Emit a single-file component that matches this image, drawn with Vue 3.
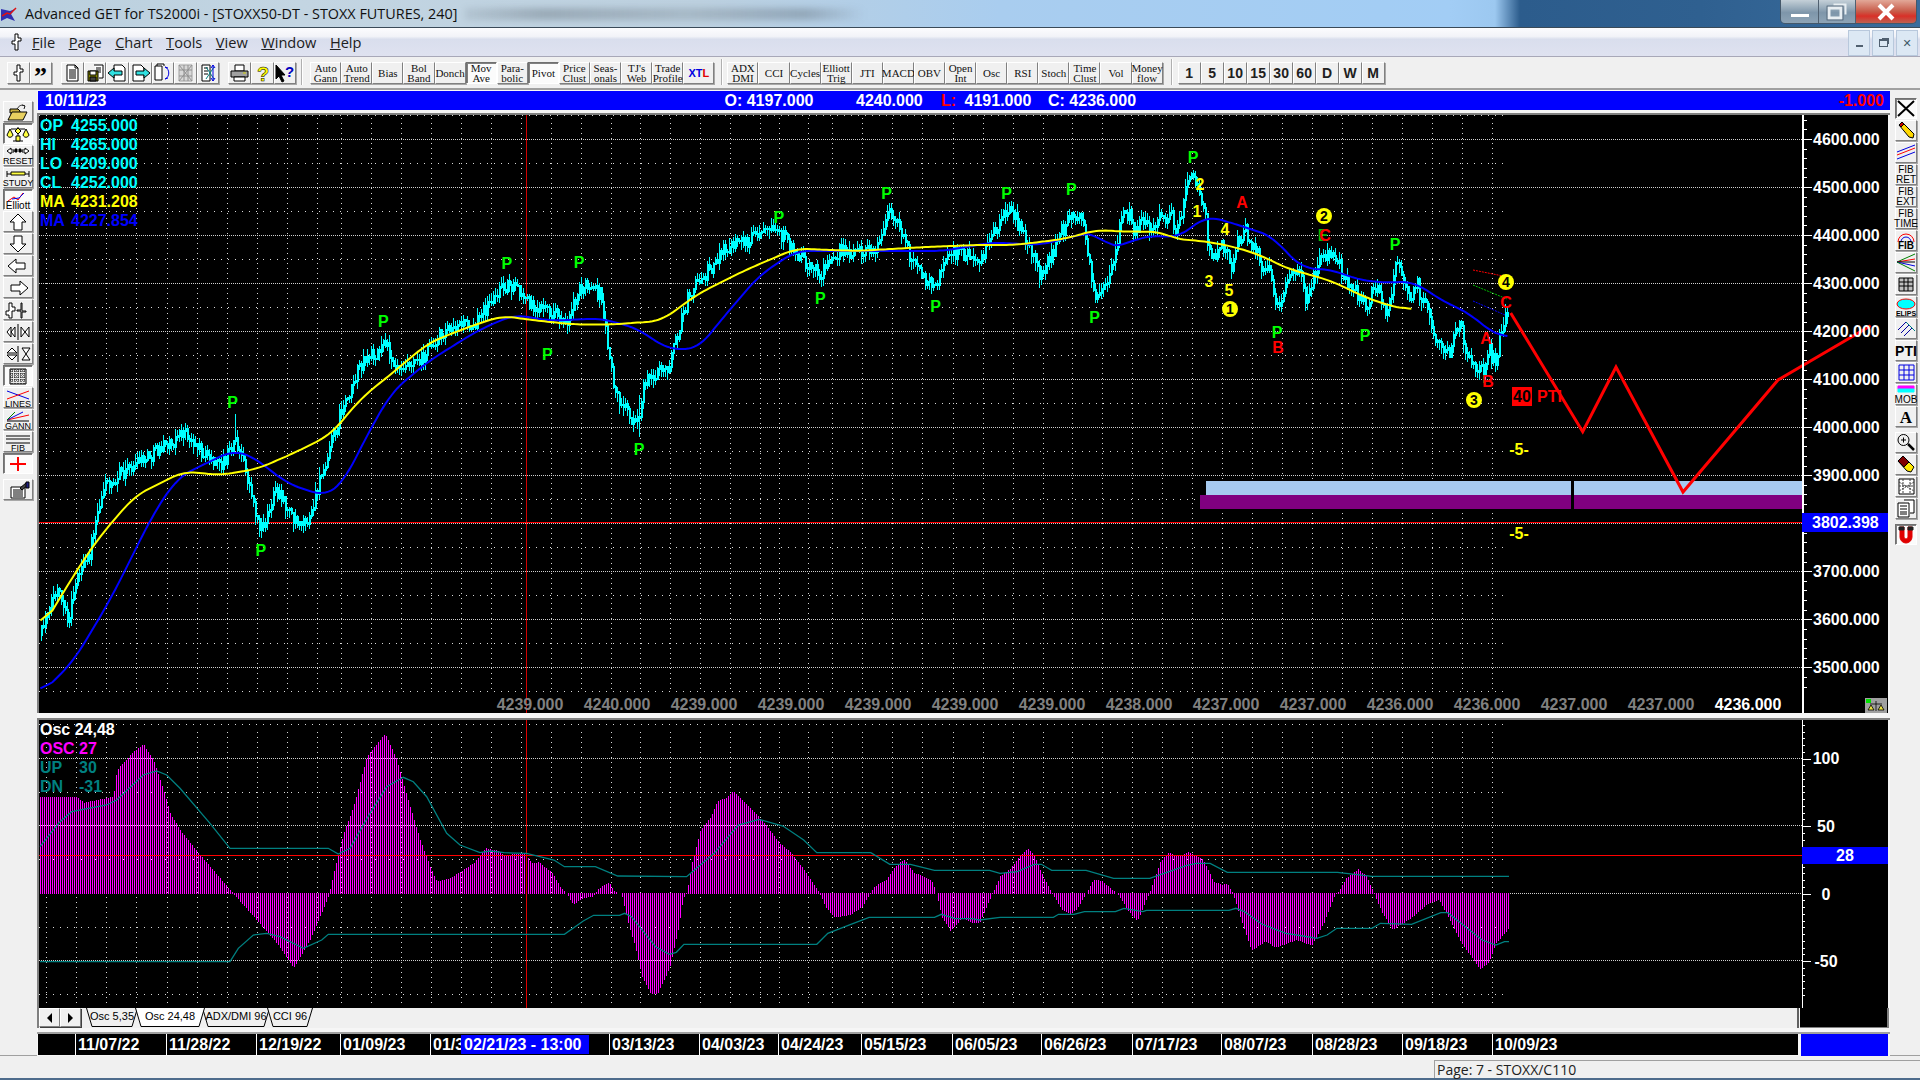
<script setup>
import { h } from 'vue'

const dsp = a => a.map(([x, y]) => [x * 1.2245, y * 1.2245])
const z5 = a => a.map(([x, y]) => [1100 + x / 3, 140 + y / 3])
const z9 = a => a.map(([x, y]) => [x / 3, 700 + y / 3])
const z11 = a => a.map(([x, y]) => [480 + x / 2.904, 720 + y / 3])
const z12 = a => a.map(([x, y]) => [1000 + x / 2.904, 720 + y / 3])
const pl = a => a.map(p => p[0].toFixed(1) + ',' + p[1].toFixed(1)).join(' ')
const interp = (a, x) => {
  if (x <= a[0][0]) return a[0][1]
  for (let i = 1; i < a.length; i++) {
    if (x <= a[i][0]) {
      const t = (x - a[i - 1][0]) / (a[i][0] - a[i - 1][0] || 1)
      return a[i - 1][1] + t * (a[i][1] - a[i - 1][1])
    }
  }
  return a[a.length - 1][1]
}
const smooth = (a, step = 3, win = 4) => {
  const x0 = a[0][0], x1 = a[a.length - 1][0], out = []
  for (let x = x0; x <= x1; x += step) {
    let s = 0, n = 0
    for (let k = -win; k <= win; k++) {
      const xx = x + k * step
      if (xx < x0 || xx > x1) continue
      s += interp(a, xx); n++
    }
    out.push([x, s / n])
  }
  return out
}
let seed = 12345
const rnd = () => {
  seed = (seed * 1664525 + 1013904223) % 4294967296
  return seed / 4294967296
}

const pricePath = [
  ...dsp([[33,518],[40,490],[47,482],[55,510],[62,470],[72,455],[78,420],[85,395],[100,385],[125,370],[150,352],[168,372],[180,380],[192,358],[197,375],[203,395],[212,432],[225,402],[240,422],[252,425],[260,395],[268,365],[280,330],[295,295],[315,280],[322,298],[345,290],[365,265],[390,262],[400,245],[415,230],[430,245],[445,255],[463,260],[473,232],[490,240],[497,290],[502,320],[515,340],[522,345],[525,310],[545,300],[562,240],[590,205],[610,195],[635,188],[650,205],[670,225],[680,205],[715,205],[725,172],[735,185],[745,215],[762,235],[775,205],[800,210],[815,180],[825,170],[835,190],[850,225],[875,170],[885,185],[893,240]]),
  ...z5([[5,460],[30,380],[50,300],[60,230],[90,210],[100,270],[130,240],[150,280],[180,230],[215,225],[225,300],[245,200],[255,150],[280,95],[300,170],[310,200],[320,260],[320,310],[335,370],[350,320],[375,310],[390,390],[405,310],[420,300],[430,250],[445,310],[470,330],[480,400],[500,390],[515,420],[525,470],[545,490],[555,440],[570,400],[600,370],[615,470],[640,410],[660,345],[695,350],[720,380],[735,410],[760,450],[800,500],[820,430],[850,480],[860,520],[880,420],[890,350],[905,420],[930,470],[950,415],[960,470],[990,530],[1005,600],[1020,630],[1050,630],[1065,580],[1075,530],[1090,600],[1105,650],[1120,690],[1150,680],[1165,630],[1185,670],[1195,600],[1210,540],[1225,515]])
]
let wickD = '', bodyD = '', prev = pricePath[0][1]
for (let x = 41; x <= 1507; x += 2) {
  const c = interp(pricePath, x) + (rnd() - 0.5) * 14
  const top = Math.min(prev, c), bot = Math.max(prev, c) + 2
  wickD += `M${x + 0.5} ${(top - rnd() * 8).toFixed(0)}V${(bot + rnd() * 8).toFixed(0)}`
  bodyD += `M${x + 1} ${top.toFixed(0)}V${bot.toFixed(0)}`
  prev = c
}
const spikes = [[235,414,445],[639,437,395]].map(s => `M${s[0]} ${s[1]}V${s[2]}`).join('')
const candleWick = wickD + spikes
const candleBody = bodyD

const yellowPts = pl(smooth([
  ...dsp([[33,515],[60,470],[80,440],[110,405],[150,385],[180,388],[210,383],[240,370],[270,355],[295,325],[320,305],[350,280],[380,268],[410,258],[440,262],[470,265],[500,265],[540,262],[570,240],[610,220],[650,203],[700,205],[750,202],[800,200],[830,200],[870,195],[898,187]]),
  ...z5([[0,272],[100,275],[180,275],[230,298],[310,303],[400,320],[480,345],[560,385],[650,410],[700,425],[780,465],[860,495],[935,510]])
]))
const bluePts = pl(smooth([
  ...dsp([[33,567],[60,540],[90,490],[125,420],[145,390],[165,380],[190,368],[205,372],[235,395],[265,405],[280,395],[300,355],[320,320],[350,295],[390,270],[420,257],[450,262],[490,260],[520,268],[545,285],[570,285],[590,260],[620,225],[650,205],[700,205],[740,205],[770,205],[810,198],[850,200],[880,192],[898,190]]),
  ...z5([[0,305],[40,325],[100,300],[170,285],[230,295],[270,265],[320,228],[400,250],[520,290],[560,340],[610,385],[700,390],[760,415],[840,428],[940,425],[1040,490],[1100,515],[1180,580],[1225,595]])
]))
const redPts = pl([[1510.7,313],[1582.7,431.7],[1616,367],[1683,492],[1778,380],[1870.7,325.7]])

const cols = [46,76,106,136,166.5,196.5,226.5,257,287,317,340.6,370.7,400.8,431,461,491,520.5,550.5,580.5,610.5,640,670,700,729.6,759.6,779,808,832,862,892,922,952.7,982.7,1012.7,1042.7,1072.3,1102.3,1132.3,1162.3,1192.3,1222.4,1252.4,1282.4,1312.3,1342.3,1372.2,1402.2,1432.2,1462.1,1492.4].map(x => Math.round(x) + 0.5)
const colD = (a, b) => cols.map(x => `M${x} ${a}V${b}`).join('')

const mainMajor = [], mainMinor = []
for (let i = 0; i < 12; i++) mainMajor.push(Math.round(139 + i * 48.03) + 0.5)
for (let i = -1; i < 12; i++) mainMinor.push(Math.round(163 + i * 48.03) + 0.5)
const mainMajorD = mainMajor.map(y => `M39 ${y}H1803`).join('')
const mainMinorD = mainMinor.map(y => `M39 ${y}H1505`).join('')
const mainColD = colD(118, 692)
const axisLabels = [4600,4500,4400,4300,4200,4100,4000,3900,null,3700,3600,3500]
  .map((v, i) => ({ v, y: 139 + i * 48.03 })).filter(a => a.v).map(a => ({ t: a.v + '.000', y: a.y + 6 }))
let tickMain = ''
for (let i = -2; i < 58; i++) {
  const y = Math.round(139 + i * 9.606) + 0.5
  if (y > 118 && y < 712 && !(y > 512 && y < 533)) tickMain += `M1803 ${y}h${i % 5 === 0 ? 9 : 4}`
}
const bottomLabels = [4239,4240,4239,4239,4239,4239,4239,4238,4237,4237,4236,4236,4237,4237,4236]
  .map((v, i) => ({ t: v + '.000', x: 530 + i * 87, c: i === 14 ? '#fff' : '#808080' }))
const legendMain = [
  ['OP', '4255.000', '#00ffff'], ['HI', '4265.000', '#00ffff'], ['LO', '4209.000', '#00ffff'],
  ['CL', '4252.000', '#00ffff'], ['MA', '4231.208', '#ffff00'], ['MA', '4227.854', '#0000ff']
].map((r, i) => ({ a: r[0], b: r[1], c: r[2], y: 131 + i * 19 }))

const pLabels = dsp([[190,328],[213,449],[313,262],[414,215],[447,289],[473,214],[522,367],[636,177],[670,243],[724,158],[764,250],[822,158],[875,154],[894,259]])
  .concat([[1193,157],[1395,244],[1277,332],[1365,335]])
const chartMarks = [
  ...pLabels.map(p => ({ t: 'P', x: p[0], y: p[1], c: '#00ff00' })),
  { t: '2', x: 1200, y: 184, c: '#ffff00' }, { t: '1', x: 1197, y: 211, c: '#ffff00' },
  { t: '4', x: 1225, y: 229, c: '#ffff00' }, { t: '3', x: 1209, y: 281, c: '#ffff00' },
  { t: '5', x: 1229, y: 290, c: '#ffff00' }, { t: 'A', x: 1242, y: 202, c: '#ff0000' },
  { t: 'E', x: 1323, y: 235, c: '#00c000' }, { t: 'C', x: 1325, y: 235, c: '#ff0000' },
  { t: 'B', x: 1278, y: 347, c: '#ff0000' }, { t: 'B', x: 1488, y: 381, c: '#ff0000' },
  { t: 'A', x: 1486, y: 338, c: '#ff0000' }, { t: 'C', x: 1506, y: 302, c: '#ff0000' },
  { t: '-5-', x: 1519, y: 449, c: '#ffff00' }, { t: '-5-', x: 1519, y: 532.5, c: '#ffff00' }
]
const circles = [[1230,309,'1'],[1324,216,'2'],[1474,400,'3'],[1506,282,'4']].map(c => ({ x: c[0], y: c[1], t: c[2] }))

const histEnv = [
  ...z9([[120,290],[230,290],[250,308],[340,290],[350,210],[400,155],[430,133],[460,180],[490,270],[510,340],[540,390],[600,465],[690,570],[700,582],[760,650],[830,730],[880,805],[930,720],[985,590],[1000,520],[1030,400],[1060,320],[1100,170],[1155,100],[1190,180],[1230,320],[1260,420],[1290,500],[1310,545],[1350,535],[1420,490]]),
  ...z11([[0,405],[15,385],[50,392],[70,405],[130,400],[150,430],[170,427],[210,460],[235,505],[250,520],[270,553],[300,535],[325,530],[335,520],[345,505],[375,487],[390,515],[410,520],[430,610],[450,680],[470,770],[495,822],[515,822],[550,745],[575,630],[590,535],[600,520],[615,430],[640,330],[670,290],[690,242],[715,235],[735,213],[790,270],[830,315],[870,370],[900,395],[930,435],[955,470],[985,520],[1005,565],[1030,593],[1075,585],[1110,560],[1130,525],[1145,500],[1180,478],[1205,440],[1230,418],[1260,458],[1310,480],[1325,520],[1340,590],[1365,632],[1400,595],[1430,610],[1450,610]]),
  ...z12([[0,468],[30,445],[60,405],[82,385],[100,410],[125,470],[150,520],[180,570],[205,583],[225,565],[250,520],[270,480],[295,482],[325,510],[340,520],[370,570],[398,605],[420,550],[435,515],[465,425],[490,397],[520,410],[545,397],[590,420],[620,485],[645,495],[660,490],[675,520],[700,600],[730,692],[770,665],[800,683],[860,660],[905,677],[940,610],[970,530],[985,510],[1005,475],[1040,448],[1065,470],[1085,520],[1110,580],[1140,630],[1200,590],[1240,552],[1275,540],[1300,590],[1340,670],[1395,750],[1420,725],[1440,670],[1478,625]])
]
let histD = ''
for (let x = 40; x <= 1509; x += 2) {
  const y = Math.round(interp(histEnv, x))
  if (Math.abs(y - 893) >= 1) histD += `M${x + 0.5} ${y}V${y < 893 ? 894 : 893}`
}
const upPts = pl([
  ...z9([[120,440],[180,365],[215,335],[320,315],[350,300],[430,225],[470,213],[500,225],[540,265],[630,370],[690,445],[985,445],[1015,462],[1050,445],[1110,340],[1160,260],[1210,232],[1240,245],[1280,290],[1340,400],[1380,435]]),
  ...z11([[0,398],[30,393],[70,398],[135,400],[215,420],[245,440],[335,440],[400,468],[600,470],[680,400],[750,315],[810,298],[880,318],[940,360],[978,398],[1135,398],[1190,433],[1250,433],[1320,451],[1480,451]]),
  ...z12([[0,460],[50,455],[100,433],[120,433],[150,451],[250,451],[330,475],[435,475],[540,437],[570,430],[610,430],[660,457],[980,457],[1080,469],[1478,469]])
])
const dnPts = pl([
  ...z9([[120,785],[690,785],[715,745],[760,705],[800,700],[840,710],[910,745],[965,720],[985,703]]),
  ...z11([[0,643],[245,643],[300,603],[330,586],[405,586],[420,580],[440,590],[510,680],[550,703],[570,697],[592,673],[978,673],[1010,640],[1060,620],[1130,592],[1320,592],[1340,583],[1380,596],[1430,596],[1450,600]]),
  ...z12([[0,592],[155,592],[170,583],[215,583],[245,575],[335,575],[360,565],[415,575],[425,571],[665,571],[685,565],[710,575],[760,612],[830,640],[880,648],[920,655],[950,645],[978,625],[1080,625],[1105,610],[1195,613],[1280,578],[1300,578],[1400,660],[1440,675],[1465,665],[1478,665]])
])
const oscMajorD = [758, 825, 960].map(y => `M39 ${y + 0.5}H1802`).join('') + 'M1510 893.5H1802'
const oscMinorD = [724, 792, 859, 927, 994].map(y => `M39 ${y + 0.5}H1505`).join('')
const oscColD = colD(732, 1006)
let tickOsc = ''
for (let i = -5; i < 36; i++) {
  const y = Math.round(758.5 + i * 6.75) + 0.5
  if (y > 722 && y < 1008 && !(y > 846 && y < 865)) tickOsc += `M1802 ${y}h${i % 10 === 0 ? 9 : 3}`
}
const oscAxis = [['100', 764], ['50', 832], ['0', 900], ['-50', 967]].map(a => ({ t: a[0], y: a[1] }))

const dates = [[76,'11/07/22'],[166.5,'11/28/22'],[257,'12/19/22'],[340.6,'01/09/23'],[431,'01/3'],[610,'03/13/23'],[700,'04/03/23'],[779,'04/24/23'],[862,'05/15/23'],[952.7,'06/05/23'],[1042,'06/26/23'],[1132.7,'07/17/23'],[1222,'08/07/23'],[1312.5,'08/28/23'],[1402.5,'09/18/23'],[1492.5,'10/09/23']]
  .map(d => ({ x: Math.round(d[0]), t: d[1] }))

const SANS = 'Liberation Sans, Arial, sans-serif'
const K = '#000'
const icons = {
  chart: [{ d: 'M10 3h3v4h3v3h-3v9h-3v-6H7v-3h3z', f: '#fff' }],
  quote: [{ t: '”', x: 5, y: 23, s: 26, w: 'bold', fam: 'Liberation Serif' }],
  page: [{ d: 'M6 3h8l3 3v13H6z M14 3v3h3 M8 8h7 M8 10h7 M8 12h7 M8 14h7 M8 16h7', f: '#fff' }],
  save: [{ d: 'M10 3h9v13h-4M12 6h5M12 8h5M12 10h5', f: '#fff' }, { d: 'M4 9h10v10H4z', f: '#808000' }, { d: 'M6 9h6v4H6z', f: '#fff' }, { d: 'M6 15h6v4H6z', f: '#404040' }],
  prev: [{ d: 'M8 3h8l3 3v13H8z', f: '#fff' }, { d: 'M2 11l6-5v3h8v4H8v3z', f: '#30e0e0' }],
  next: [{ d: 'M4 3h8l3 3v13H4z', f: '#fff' }, { d: 'M21 11l-6-5v3H7v4h8v3z', f: '#30e0e0' }],
  pgarr: [{ d: 'M4 4h7v14H4z M6 4V2h7v2', f: '#fff' }, { d: 'M14 5c5 2 5 10 0 12M14 17l3-1M14 5l3 1', c: '#0000e0' }],
  xpage: [{ d: 'M5 3h13v16H5z', c: '#a0a0a0', f: '#d8d8d8' }, { d: 'M5 3l13 16M18 3L5 19M5 8h13M5 14h13M10 3v16M14 3v16', c: '#909090' }],
  pgblue: [{ d: 'M5 3h8v16H5zM7 6h4M7 9h4M7 12h4', f: '#fff' }, { d: 'M9 5l8 12M9 17L17 5', c: '#008080' }, { d: 'M16 3v16M14 6l2-3 2 3M14 16l2 3 2-3', c: '#0000e0' }],
  print: [{ d: 'M7 3h9v6H7z', f: '#fff' }, { d: 'M3 9h17v6H3z', f: '#a0a0a0' }, { d: 'M6 15h11v4H6z', f: '#fff' }, { d: 'M15 11h3', c: '#d0d000' }],
  help: [{ t: '?', x: 6, y: 19, s: 20, w: 'bold', fill: '#ffff00', stroke: '#000', fam: SANS }],
  phelp: [{ d: 'M3 3v14l3-3 3 6 2-1-3-6h4z', f: '#000' }, { t: '?', x: 12, y: 15, s: 15, w: 'bold', fill: '#0000c0', fam: SANS }],

  open: [{ d: 'M7 7h8l2 2v2H7z', f: '#c8b040' }, { d: 'M5 18l4-8h15l-4 8z', f: '#e8d060' }, { d: 'M14 7c3-5 6-4 8-3M22 4l-3-1M22 4l-1 3', c: '#202020' }],
  scale: [{ d: 'M15 3v14M8 5h14M10 17h10', c: '#000' }, { d: 'M4 11l3-6 3 6c-1 3-5 3-6 0zM20 11l3-6 3 6c-1 3-5 3-6 0z', c: '#000', f: '#ffff40' }, { d: 'M12 7l3-3 3 3-3 3z', f: '#ffff40' }, { d: 'M13 12h4v5h-4z', f: '#ffff40' }],
  reset: [{ d: 'M4 5l4-3v2h3v2H8v2zM26 5l-4-3v2h-3v2h3v2z', f: '#fff' }, { d: 'M12 3h2v3h-2zM16 3h2v3h-2z', f: '#000' }, { t: 'RESET', x: 15, y: 18, s: 9, a: 'middle', fam: SANS }],
  study: [{ d: 'M4 3v6M26 3v6M4 6h22', c: '#000' }, { d: 'M8 4h14v3H8z', f: '#ffff40' }, { t: 'STUDY', x: 15, y: 18, s: 9, a: 'middle', fam: SANS }],
  elliott: [{ d: 'M5 11l6-4 4 3 5-7', c: '#ff0000' }, { d: 'M9 9l7-1 5-5', c: '#0000e0' }, { t: 'Elliott', x: 15, y: 19, s: 10, a: 'middle', fam: SANS }],
  up: [{ d: 'M15 2l8 8h-4v8h-8v-8H7z', f: '#fff' }],
  down: [{ d: 'M15 18l8-8h-4V2h-8v8H7z', f: '#fff' }],
  left: [{ d: 'M5 10l8-7v4h9v6h-9v4z', f: '#fff' }],
  right: [{ d: 'M25 10l-8-7v4H8v6h9v4z', f: '#fff' }],
  barz: [{ d: 'M6 3h3v4h3v4H9v7H6v-3H3v-4h3zM18 3h1v8h4v1h-4v6h-1v-7h-4v-1h4z', f: '#fff' }],
  hz: [{ d: 'M4 10l4-5v10zM12 5v10l-4-5zM15 2v16M18 5v10l4-5zM26 5v10l-4-5z', f: '#fff' }],
  vz: [{ d: 'M4 9l5-5 5 5zM4 11l5 5 5-5zM15 2v16', f: '#fff' }, { d: 'M19 4h8l-4 6 4 6h-8l4-6z', f: '#fff' }],
  grid: [{ d: 'M7 3h16v15H7z', f: '#e8e8e8' }, { d: 'M7 5h16M7 8h16M7 11h16M7 14h16M9 3v15M12 3v15M15 3v15M18 3v15M21 3v15', c: '#000', dash: '1 1' }],
  lines: [{ d: 'M4 3l22 8', c: '#0000e0' }, { d: 'M4 11l22-8', c: '#ff0000' }, { t: 'LINES', x: 15, y: 19, s: 9, a: 'middle', fam: SANS }],
  gann: [{ d: 'M4 10l22-5', c: '#ff0000' }, { d: 'M4 10l16-8', c: '#0000e0' }, { d: 'M4 10l8-8', c: '#008000' }, { d: 'M4 11h22', c: '#000' }, { t: 'GANN', x: 15, y: 19, s: 9, a: 'middle', fam: SANS }],
  fib: [{ d: 'M3 4h24M3 7h24M3 11h24', c: '#000' }, { t: 'FIB', x: 15, y: 19, s: 9, a: 'middle', fam: SANS }],
  cross: [{ d: 'M15 3v14M7 10h16', c: '#ff0000', sw: 2 }],
  setting: [{ d: 'M8 7h14v11H8zM10 10h10M10 12h10M10 14h10M10 16h10', f: '#fff' }, { d: 'M17 8l6-5 2 2-6 5z', f: '#404040' }, { d: 'M23 2h3v6h-3z', f: '#202080' }],

  x: [{ d: 'M3 3l16 15M19 3L3 18', c: '#000', sw: 2 }],
  pencil: [{ d: 'M4 5l3-3 12 12-1 4-4-1z', f: '#ffd800' }, { d: 'M4 5l3-3 2 2-3 3z', f: '#c00000' }],
  rlines: [{ d: 'M2 13l18-7', c: '#ff0000' }, { d: 'M2 10l18-7', c: '#0000e0' }, { d: 'M2 17l18-7', c: '#0000e0' }],
  fret: [{ t: 'FIB', x: 11, y: 9, s: 10, a: 'middle', fam: SANS }, { t: 'RET', x: 11, y: 19, s: 10, a: 'middle', fam: SANS }],
  fext: [{ t: 'FIB', x: 11, y: 9, s: 10, a: 'middle', fam: SANS }, { t: 'EXT', x: 11, y: 19, s: 10, a: 'middle', fam: SANS }],
  ftime: [{ t: 'FIB', x: 11, y: 9, s: 10, a: 'middle', fam: SANS }, { t: 'TIME', x: 11, y: 19, s: 10, a: 'middle', fam: SANS }],
  farc: [{ d: 'M3 12a8 8 0 0 1 16 0', c: '#ff0000' }, { d: 'M6 12a5 5 0 0 1 10 0', c: '#0000e0' }, { t: 'FIB', x: 11, y: 19, s: 10, w: 'bold', a: 'middle', fam: SANS }],
  fan: [{ d: 'M2 10l18-8', c: '#008000' }, { d: 'M2 10l18-3', c: '#ff0000' }, { d: 'M2 10h18', c: '#000' }, { d: 'M2 10l18 4', c: '#0000e0' }, { d: 'M2 10l18 9', c: '#008000' }],
  tab: [{ d: 'M4 4h14v13H4z', f: '#c0c0c0' }, { d: 'M4 8h14M4 12h14M9 4v13M13 4v13' }],
  elips: [{ d: 'M2 8a9 5 0 1 0 18 0a9 5 0 1 0-18 0', c: '#ff0000', f: '#00ffff' }, { t: 'ELIPS', x: 11, y: 20, s: 7, w: 'bold', a: 'middle', fam: SANS }],
  hatch: [{ d: 'M3 12l8-8M6 15l8-8M9 18l8-8', c: '#0000a0' }, { d: 'M11 4l9 9', c: '#008080' }],
  pti: [{ t: 'PTI', x: 11, y: 16, s: 14, w: 'bold', a: 'middle', fam: SANS }],
  bgrid: [{ d: 'M4 3h15v15H4zM4 8h15M4 13h15M9 3v15M14 3v15', c: '#0000e0' }],
  mob: [{ d: 'M3 2h16v3H3z', f: '#ff00ff', c: '#ff00ff' }, { d: 'M3 5h16v3H3z', f: '#00ffff', c: '#00ffff' }, { t: 'MOB', x: 11, y: 19, s: 10, a: 'middle', fam: SANS }],
  a: [{ t: 'A', x: 11, y: 17, s: 17, w: 'bold', a: 'middle', fam: 'Liberation Serif' }],
  mag: [{ d: 'M3 8a5.5 5.5 0 1 0 11 0a5.5 5.5 0 1 0-11 0M6 8h5M8.5 5.5v5' }, { d: 'M13 12l6 6', sw: 2.5 }],
  eraser: [{ d: 'M3 7l5-5 11 11-3 5-4-1z', f: '#ffe800' }, { d: 'M3 7l5-5 6 6-5 5z', f: '#800000' }],
  dots: [{ d: 'M4 3h15v15H4z', f: '#fff' }, { d: 'M4 6l15 9M19 6L4 15M8 3v15M15 3v15M4 10h15', c: '#404040', dash: '2 1' }],
  pages: [{ d: 'M9 2h10v13h-4', f: '#fff' }, { d: 'M3 5h11v14H3zM5 8h7M5 11h7M5 14h7M5 16h7', f: '#fff' }],
  magnet: [{ d: 'M5 3h4v10a2 2 0 0 0 4 0V3h4v10a6 6 0 0 1-12 0z', f: '#e00000', c: '#e00000' }, { d: 'M4 3h5v3H4zM13 3h5v3h-5z', f: '#202020', c: '#202020' }]
}

const Ico = props =>
  h('svg', { width: props.w, height: props.h, viewBox: `0 0 ${props.w} ${props.h}`, overflow: 'visible', 'aria-hidden': 'true' },
    (icons[props.name] || []).map(p => p.t
      ? h('text', { x: p.x, y: p.y, 'font-size': p.s, 'font-weight': p.w || 'normal', 'text-anchor': p.a || 'start', fill: p.fill || K, stroke: p.stroke || 'none', 'stroke-width': 0.5, 'font-family': p.fam }, p.t)
      : h('path', { d: p.d, fill: p.f || 'none', stroke: p.c || K, 'stroke-width': p.sw || 1, 'stroke-dasharray': p.dash || null })))
Ico.props = ['name', 'w', 'h']

const topA = ['chart', 'quote']
const topB = ['page', 'save', 'prev', 'next', 'pgarr', 'xpage', 'pgblue']
const topC = ['print', 'help', 'phelp']
const textA = [['Auto','Gann'],['Auto','Trend'],['Bias'],['Bol','Band'],['Donch'],['Mov','Ave',1],['Para-','bolic'],['Pivot',1],['Price','Clust'],['Seas-','onals'],["TJ's",'Web'],['Trade','Profile'],['XTL']]
  .map(a => ({ lines: a.filter(v => typeof v === 'string'), on: a.includes(1) }))
const textB = [['ADX','DMI'],['CCI'],['Cycles'],['Elliott','Trig'],['JTI'],['MACD'],['OBV'],['Open','Int'],['Osc'],['RSI'],['Stoch'],['Time','Clust'],['Vol'],['Money','flow']]
const periods = ['1', '5', '10', '15', '30', '60', 'D', 'W', 'M']
const menus = [['F', 'ile'], ['P', 'age'], ['C', 'hart'], ['T', 'ools'], ['V', 'iew'], ['W', 'indow'], ['H', 'elp']]
const leftTools = [
  [{ i: 'open' }, { i: 'scale', on: 1 }, { i: 'reset' }, { i: 'study' }, { i: 'elliott', on: 1 }, { i: 'up' }, { i: 'down' }, { i: 'left' }, { i: 'right' }, { i: 'barz' }, { i: 'hz' }, { i: 'vz' }, { i: 'grid', on: 1 }, { i: 'lines' }, { i: 'gann' }, { i: 'fib' }, { i: 'cross', on: 1 }],
  [{ i: 'setting' }]
]
const rightTools = [
  [{ i: 'x', on: 1 }, { i: 'pencil' }, { i: 'rlines' }, { i: 'fret' }, { i: 'fext' }, { i: 'ftime' }, { i: 'farc' }, { i: 'fan' }, { i: 'tab' }, { i: 'elips' }, { i: 'hatch' }, { i: 'pti' }, { i: 'bgrid' }, { i: 'mob' }, { i: 'a' }],
  [{ i: 'mag' }, { i: 'eraser' }, { i: 'dots' }, { i: 'pages' }],
  [{ i: 'magnet', on: 1 }]
]
const tabs = [{ t: 'Osc 5,35', w: 52 }, { t: 'Osc 24,48', w: 70, on: 1 }, { t: 'ADX/DMI 96', w: 68 }, { t: 'CCI 96', w: 46 }]
</script>

<template>
  <div class="app">
    <header class="title">
      <svg class="logo" width="20" height="18" viewBox="0 0 20 18">
        <path d="M0 4l9 2 5-2-4 5 4 7-8-3-6 3z" fill="#3030b0" />
        <path d="M1 11l5-3 3 1 6-6" fill="none" stroke="#e01010" stroke-width="1.5" />
      </svg>
      <span class="title-text">Advanced GET for TS2000i - [STOXX50-DT - STOXX FUTURES, 240]</span>
      <div class="smudge"></div>
      <div class="winbtns">
        <div class="wb wb-min"><i></i></div>
        <div class="wb wb-max">
          <svg width="22" height="18" viewBox="0 0 22 18">
            <path d="M7.5 1.5h12v10" fill="none" stroke="#e8eef2" stroke-width="2" />
            <rect x="3" y="5" width="12" height="10" fill="none" stroke="#e8eef2" stroke-width="3" />
            <rect x="1" y="3" width="16" height="14" fill="none" stroke="#45586a" stroke-width="0.7" />
          </svg>
        </div>
        <div class="wb wb-close">
          <svg width="22" height="18" viewBox="0 0 22 18"><path d="M4 2l14 14M18 2L4 16" stroke="#fff" stroke-width="4" /></svg>
        </div>
      </div>
    </header>

    <nav class="menubar">
      <Ico class="grip" name="chart" :w="23" :h="22" />
      <span v-for="m in menus" :key="m[0]" class="menu"><u>{{ m[0] }}</u>{{ m[1] }}</span>
      <div class="mdi">
        <div class="mdib"><i class="m1"></i></div>
        <div class="mdib"><i class="m2"></i></div>
        <div class="mdib">✕</div>
      </div>
    </nav>

    <div class="toolbar">
      <div class="grp g1"><div v-for="n in topA" :key="n" class="btn ib"><Ico :name="n" :w="23" :h="22" /></div></div>
      <div class="grp g2"><div v-for="n in topB" :key="n" class="btn ib"><Ico :name="n" :w="23" :h="22" /></div></div>
      <div class="grp g2"><div v-for="n in topC" :key="n" class="btn ib"><Ico :name="n" :w="23" :h="22" /></div></div>
      <div class="sep sep1"></div>
      <div class="grp">
        <div v-for="b in textA" :key="b.lines[0] + b.lines[1]" class="btn tb" :class="{ on: b.on }">
          <template v-if="b.lines[0] === 'XTL'"><span class="xtl"><b class="xb">X</b><b class="xb">T</b><b class="xr">L</b></span></template>
          <template v-else><span v-for="l in b.lines" :key="l">{{ l }}</span></template>
        </div>
      </div>
      <div class="sep sep2"></div>
      <div class="grp">
        <div v-for="b in textB" :key="b[0]" class="btn tb"><span v-for="l in b" :key="l">{{ l }}</span></div>
      </div>
      <div class="sep sep3"></div>
      <div class="grp"><div v-for="p in periods" :key="p" class="btn pb">{{ p }}</div></div>
    </div>

    <div class="body">
      <aside class="side left">
        <div v-for="(g, gi) in leftTools" :key="gi" class="tgroup">
          <div v-for="b in g" :key="b.i" class="btn lb" :class="{ on: b.on }"><Ico :name="b.i" :w="30" :h="20" /></div>
        </div>
      </aside>

      <main class="center">
        <div class="bluehead">
          <span class="hd-date">10/11/23</span>
          <span class="hd-o">O: 4197.000</span>
          <span class="hd-h">4240.000</span>
          <span class="hd-l"><em>L:</em> 4191.000</span>
          <span class="hd-c">C: 4236.000</span>
          <span class="hd-net">-1.000</span>
        </div>

        <div class="panel main-panel">
          <svg class="chart" width="1849" height="598" viewBox="39 115 1849 598">
            <rect x="39" y="115" width="1849" height="598" fill="#000" />
            <g shape-rendering="crispEdges" fill="none">
              <path :d="mainMajorD" stroke="#d0d0d0" stroke-dasharray="1 1" />
              <path :d="mainMinorD" stroke="#d8d8d8" stroke-dasharray="1 6" />
              <path :d="mainColD" stroke="#d8d8d8" stroke-dasharray="1 4" />
              <path d="M526.5 115V713" stroke="#d00000" />
            </g>
            <rect x="1206" y="481" width="597" height="14" fill="#a6caf0" />
            <rect x="1200" y="495" width="603" height="14" fill="#800080" />
            <rect x="1571" y="481" width="3" height="28" fill="#000" />
            <path d="M39 522.5H1803" stroke="#ff0000" shape-rendering="crispEdges" />
            <g fill="none" shape-rendering="crispEdges">
              <path :d="candleWick" stroke="#00ffff" />
              <path :d="candleBody" stroke="#00ffff" stroke-width="2" />
            </g>
            <polyline :points="bluePts" fill="none" stroke="#0000ff" stroke-width="2" />
            <polyline :points="yellowPts" fill="none" stroke="#ffff00" stroke-width="2" />
            <path d="M1473 270l35 7" stroke="#ff0000" stroke-dasharray="2 1" />
            <path d="M1473 285l34 14" stroke="#00c000" stroke-dasharray="2 1" />
            <path d="M1473 301l32 14" stroke="#0000ff" stroke-dasharray="2 1" />
            <polyline :points="redPts" fill="none" stroke="#ff0000" stroke-width="3" />
            <g class="mark">
              <text v-for="(m, i) in chartMarks" :key="i" :x="m.x" :y="m.y + 6" :fill="m.c" text-anchor="middle">{{ m.t }}</text>
              <g v-for="c in circles" :key="c.t">
                <circle :cx="c.x" :cy="c.y" r="8" fill="#ffff00" />
                <text :x="c.x" :y="c.y + 5" fill="#000" text-anchor="middle" class="cnum">{{ c.t }}</text>
              </g>
              <rect x="1512" y="387" width="20" height="19" fill="#ff0000" />
              <text x="1522" y="402" fill="#000" text-anchor="middle">40</text>
              <text x="1537" y="402" fill="#ff0000">PTI</text>
            </g>
            <g class="mark">
              <g v-for="l in legendMain" :key="l.b" :fill="l.c">
                <text x="40" :y="l.y">{{ l.a }}</text>
                <text x="71" :y="l.y">{{ l.b }}</text>
              </g>
              <text v-for="(b, i) in bottomLabels" :key="i" :x="b.x" y="710" :fill="b.c" text-anchor="middle">{{ b.t }}</text>
            </g>
            <g shape-rendering="crispEdges">
              <path d="M1803 115V713" stroke="#fff" stroke-width="2" fill="none" />
              <path :d="tickMain" stroke="#fff" fill="none" />
              <rect x="1802" y="513" width="86" height="19" fill="#0000ff" />
            </g>
            <g class="mark" fill="#fff">
              <text v-for="a in axisLabels" :key="a.t" x="1813" :y="a.y">{{ a.t }}</text>
              <text x="1812" y="528">3802.398</text>
            </g>
            <g>
              <rect x="1865" y="698" width="22" height="15" fill="#a0a0a0" />
              <rect x="1866" y="699" width="5" height="4" fill="#00e000" />
              <path d="M1868 710l3-5 3 5zM1878 710l3-5 3 5zM1870 704h12M1876 701v10" stroke="#000" fill="#e8e040" stroke-width="0.8" />
            </g>
          </svg>
        </div>

        <div class="panel osc-panel">
          <svg class="chart" width="1849" height="288" viewBox="39 720 1849 288">
            <rect x="39" y="720" width="1849" height="288" fill="#000" />
            <g shape-rendering="crispEdges" fill="none">
              <path :d="oscMajorD" stroke="#d0d0d0" stroke-dasharray="1 1" />
              <path :d="oscMinorD" stroke="#d8d8d8" stroke-dasharray="1 6" />
              <path :d="oscColD" stroke="#d8d8d8" stroke-dasharray="1 4" />
              <path :d="histD" stroke="#ff00ff" />
              <path d="M39 855.5H1802" stroke="#ff0000" />
              <path d="M526.5 720V1008" stroke="#e00000" />
            </g>
            <polyline :points="upPts" fill="none" stroke="#008080" stroke-width="1.3" />
            <polyline :points="dnPts" fill="none" stroke="#008080" stroke-width="1.3" />
            <g class="mark">
              <text x="40" y="735" fill="#fff">Osc 24,48</text>
              <text x="40" y="754" fill="#ff00ff">OSC 27</text>
              <text x="40" y="773" fill="#008080">UP</text>
              <text x="79" y="773" fill="#008080">30</text>
              <text x="40" y="792" fill="#008080">DN</text>
              <text x="79" y="792" fill="#008080">-31</text>
              <text v-for="a in oscAxis" :key="a.t" x="1826" :y="a.y" fill="#fff" text-anchor="middle">{{ a.t }}</text>
            </g>
            <g shape-rendering="crispEdges">
              <path d="M1802.5 720V1008" stroke="#fff" fill="none" />
              <path :d="tickOsc" stroke="#fff" fill="none" />
              <rect x="1802" y="847" width="86" height="17" fill="#0000ff" />
            </g>
            <text class="mark" x="1845" y="861" fill="#fff" text-anchor="middle">28</text>
          </svg>
        </div>

        <div class="tabrow">
          <div class="tabs">
            <div class="navbtn"><span class="tri tl"></span></div>
            <div class="navbtn"><span class="tri tr"></span></div>
            <div class="tablist">
              <div v-for="t in tabs" :key="t.t" class="tab" :class="{ on: t.on }">
                <svg class="tabshape" :width="t.w" height="19" :viewBox="`0 0 ${t.w} 19`">
                  <path :d="`M0.5 0L6 18.5H${t.w - 6}L${t.w - 0.5} 0`" :fill="t.on ? '#fff' : '#f0f0f0'" stroke="#000" />
                </svg>
                <span class="tablabel">{{ t.t }}</span>
              </div>
            </div>
          </div>
          <div class="osc-foot"></div>
        </div>

        <div class="daterow">
          <svg class="datebar" width="1760" height="21" viewBox="39 1034 1760 21">
            <rect x="39" y="1034" width="1760" height="21" fill="#000" />
            <g v-for="d in dates" :key="d.t">
              <path :d="`M${d.x + 0.5} 1034V1055`" stroke="#fff" shape-rendering="crispEdges" />
              <text class="datetxt" :x="d.x + 3" y="1050" fill="#fff">{{ d.t }}</text>
            </g>
            <rect x="462" y="1035" width="128" height="19" fill="#0000ff" />
            <text class="datetxt" x="465" y="1050" fill="#fff">02/21/23 - 13:00</text>
          </svg>
          <div class="bluebox"></div>
        </div>
      </main>

      <aside class="side right">
        <div v-for="(g, gi) in rightTools" :key="gi" class="tgroup rg">
          <div v-for="b in g" :key="b.i" class="btn rb" :class="{ on: b.on }"><Ico :name="b.i" :w="22" :h="21" /></div>
        </div>
      </aside>
    </div>

    <footer class="status">
      <div class="statuspane">Page: 7 - STOXX/C110</div>
    </footer>
  </div>
</template>

<style scoped>
.app {
  width: 1920px;
  height: 1080px;
  overflow: hidden;
  display: flex;
  flex-direction: column;
  background: #f0f0f0;
  font-family: "Liberation Sans", Arial, sans-serif;
  color: #000;
}
.title {
  position: relative;
  height: 28px;
  flex: none;
  display: flex;
  align-items: center;
  box-sizing: border-box;
  border-bottom: 1px solid #3a4a58;
  background: linear-gradient(90deg, #b9cfde 0, #c3d5e2 300px, #bcd0df 700px, #a9cdef 1000px, #a2cdf5 1450px, #9cc8f0 1495px, #2c5c8c 1520px, #2f6090 1700px, #3a6c9c 1920px);
}
.logo { margin-left: 1px; flex: none; }
.title-text {
  margin-left: 4px;
  font: 14.4px "Open Sans", "Noto Sans", sans-serif;
  color: #101010;
  white-space: nowrap;
}
.smudge {
  position: absolute;
  left: 465px;
  top: 8px;
  width: 400px;
  height: 12px;
  background: linear-gradient(90deg, rgba(70,80,90,.1), rgba(70,80,90,.3) 20%, rgba(70,80,90,.18) 55%, rgba(70,80,90,.3) 85%, rgba(70,80,90,0));
  filter: blur(3px);
}
.winbtns {
  position: absolute;
  left: 1780px;
  top: 0;
  height: 24px;
  width: 137px;
  display: flex;
  box-sizing: border-box;
  border: 1px solid #44586a;
  border-top: 0;
  border-radius: 0 0 5px 5px;
  overflow: hidden;
}
.wb {
  display: flex;
  align-items: center;
  justify-content: center;
  border-right: 1px solid #506070;
  background: linear-gradient(#c4d0d8, #7e96aa 55%, #8ea4b6);
}
.wb-min { width: 37px; }
.wb-min i { width: 18px; height: 3px; background: #fff; margin-top: 8px; }
.wb-max { width: 36px; }
.wb-close { flex: 1; border: 0; background: linear-gradient(#e2a898, #c85a48 50%, #d83028 70%, #c06050); }

.menubar {
  position: relative;
  height: 29px;
  flex: none;
  display: flex;
  align-items: center;
  box-sizing: border-box;
  border-bottom: 1px solid #a8a8b8;
  background: linear-gradient(#fcfcfe 0, #f2f3f8 30%, #d9deed 40%, #dfe2f0 100%);
  padding-left: 5px;
}
.grip { margin-right: 4px; flex: none; }
.menu { font: 14.6px "Open Sans", "Noto Sans", sans-serif; color: #202020; margin-right: 13.5px; }
.mdi { position: absolute; left: 1848px; top: 2px; display: flex; gap: 2px; }
.mdib {
  width: 22px;
  height: 26px;
  box-sizing: border-box;
  border: 1px solid #b8c8dc;
  background: #dce8f4;
  display: flex;
  align-items: center;
  justify-content: center;
  font: bold 11px "DejaVu Sans", sans-serif;
  color: #405868;
}
.m1 { width: 7px; height: 2px; background: #506070; margin-top: 6px; }
.m2 { width: 7px; height: 5px; border: 1px solid #506070; border-top-width: 2px; box-shadow: 2px -2px 0 -1px #506070; }

.toolbar {
  height: 33px;
  flex: none;
  box-sizing: border-box;
  display: flex;
  align-items: flex-start;
  padding: 5px 0 0 7px;
  background: #f0f0f0;
  border-bottom: 2px solid #a0a0a0;
}
.grp { display: flex; flex: none; }
.g2 { margin-left: 9px; }
.sep { width: 1px; height: 26px; margin-top: -3px; flex: none; background: #b0b0b0; box-shadow: 1px 0 0 #fff; }
.sep1 { margin-left: 5px; margin-right: 8px; }
.sep2 { margin-left: 7px; margin-right: 5px; }
.sep3 { margin-left: 8px; margin-right: 6px; }
.btn {
  box-sizing: border-box;
  background: #f0f0f0;
  border: 1px solid;
  border-color: #fff #808080 #808080 #fff;
  box-shadow: 1px 1px 0 #a8a8a8;
  flex: none;
  display: flex;
  align-items: center;
  justify-content: center;
}
.btn.on {
  background: #fbfbfb;
  border-color: #707070 #fff #fff #707070;
  box-shadow: inset 1px 1px 0 #808080;
}
.ib { width: 22.6px; height: 22px; }
.tb {
  width: 31.1px;
  height: 22px;
  flex-direction: column;
  font: 11px/10.5px "Liberation Serif", "DejaVu Serif", serif;
  color: #101010;
}
.xtl { font: bold 11px "Liberation Sans", sans-serif; }
.xb { color: #0000e0; }
.xr { color: #e00000; }
.pb { width: 23px; height: 22px; font: bold 14px "Liberation Sans", sans-serif; color: #202020; }

.body { flex: 1; min-height: 0; display: flex; }
.side { flex: none; background: #f0f0f0; box-sizing: border-box; border-bottom: 1px solid #a0a0a0; }
.left { width: 37px; padding: 11px 0 0 3px; }
.right { width: 30px; padding: 8px 0 0 5px; }
.tgroup { display: flex; flex-direction: column; gap: 1px; margin-bottom: 5px; }
.rg { margin-bottom: 5px; }
.lb { width: 30px; height: 21px; }
.rb { width: 22px; height: 21px; }

.center { width: 1853px; flex: none; display: flex; flex-direction: column; background: #f6f6f6; }
.bluehead {
  margin: 1px 0 0 1px;
  height: 19px;
  flex: none;
  box-sizing: border-box;
  background: #0000ff;
  color: #fff;
  font: bold 16px/19px "Liberation Sans", sans-serif;
  display: flex;
  white-space: nowrap;
}
.hd-date { margin-left: 7px; width: 679.5px; }
.hd-o { width: 131.5px; }
.hd-h { width: 85px; }
.hd-l { width: 107px; }
.hd-l em { font-style: normal; color: #ff0000; margin-right: 4px; }
.hd-c { flex: 1; }
.hd-net { color: #ff0000; margin-right: 6px; }
.panel { flex: none; border-left: 2px solid #808080; border-top: 2px solid #808080; }
.main-panel { margin-top: 3px; height: 598px; }
.osc-panel { margin-top: 5px; height: 288px; }
.chart { display: block; }
.mark { font: bold 16px "Liberation Sans", sans-serif; }
.cnum { font: bold 14px "Liberation Sans", sans-serif; }

.tabrow { height: 20px; flex: none; display: flex; border-left: 2px solid #808080; }
.tabs { width: 1760px; display: flex; background: #f0f0f0; box-sizing: border-box; align-items: flex-start; border-right: 2px solid #606060; }
.osc-foot { width: 89px; box-sizing: border-box; background: #000; margin-left: 1px; border-bottom: 1px solid #808080; border-right: 2px solid #808080; }
.navbtn {
  width: 21px;
  height: 19px;
  box-sizing: border-box;
  border: 1px solid;
  border-color: #fff #808080 #808080 #fff;
  box-shadow: 1px 1px 0 #404040;
  display: flex;
  align-items: center;
  justify-content: center;
  background: #f0f0f0;
}
.tri { width: 0; height: 0; border: 5px solid transparent; }
.tl { border-right-color: #000; border-left-width: 0; }
.tr { border-left-color: #000; border-right-width: 0; }
.tablist { display: flex; margin-left: 5px; }
.tab { position: relative; height: 19px; margin-right: -3px; }
.tab.on { z-index: 1; }
.tabshape { display: block; }
.tablabel {
  position: absolute;
  left: 0;
  right: 0;
  top: 1px;
  text-align: center;
  font: 11px/15px "Liberation Sans", sans-serif;
  white-space: nowrap;
}
.daterow { margin-top: 4px; flex: none; display: flex; height: 23px; border-top: 2px solid #a0a0a0; box-sizing: border-box; background: #f6f6f6; }
.datebar { display: block; margin-left: 1px; }
.datetxt { font: bold 16px "Liberation Sans", sans-serif; }
.bluebox { width: 87px; height: 22px; background: #0000ff; margin-left: 3px; }

.status { height: 24px; flex: none; box-sizing: border-box; background: #f0f0f0; border-bottom: 2px solid #4e6c8c; padding: 4px 0 0 1434px; }
.statuspane {
  height: 18px;
  box-sizing: border-box;
  border-top: 1px solid #a0a0a0;
  border-left: 1px solid #a0a0a0;
  padding-left: 2px;
  font: 14px/18px "Open Sans", "Noto Sans", sans-serif;
  color: #202020;
}
</style>

<style>
html, body { margin: 0; padding: 0; background: #f0f0f0; }
</style>
